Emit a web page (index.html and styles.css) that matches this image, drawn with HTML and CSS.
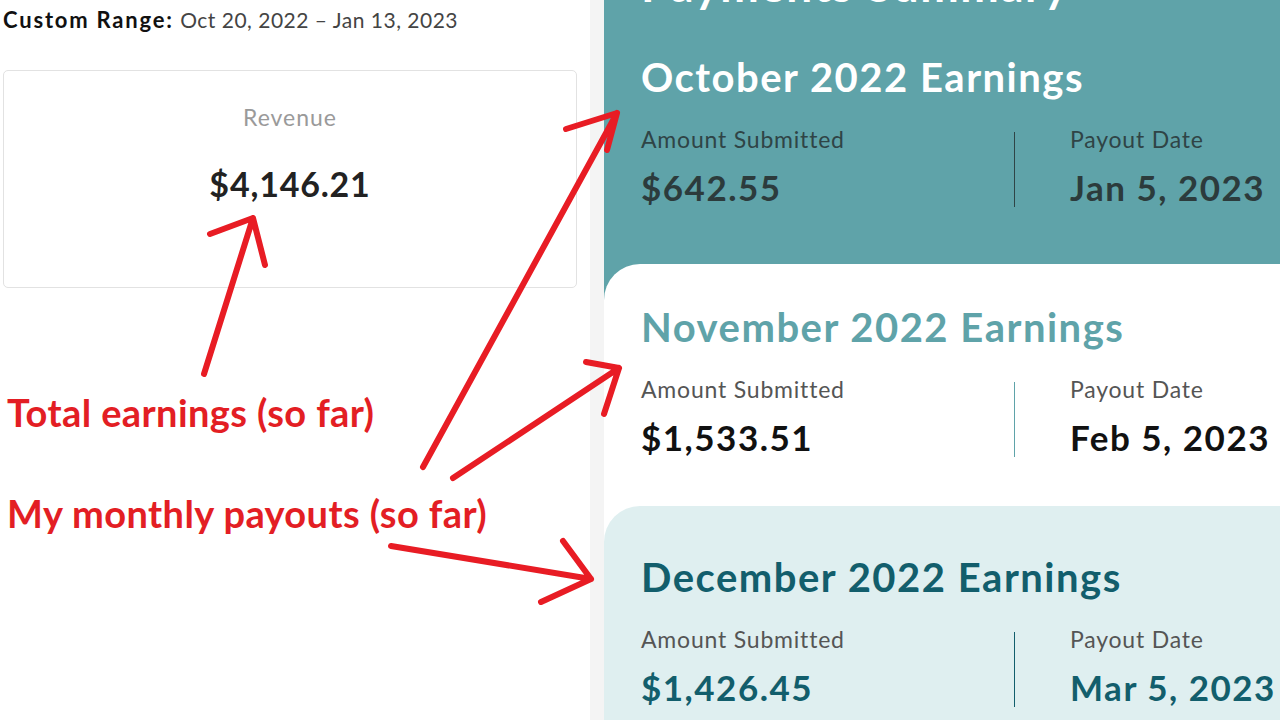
FILE: index.html
```html
<!DOCTYPE html>
<html lang="en">
<head>
<meta charset="utf-8">
<title>Payments Summary</title>
<link rel="stylesheet" href="styles.css">
</head>
<body>
<div class="page">
  <section class="left">
    <p class="range"><b>Custom Range:</b> <span>Oct 20, 2022 – Jan 13, 2023</span></p>
    <div class="revenue">
      <div class="rev-label">Revenue</div>
      <div class="rev-value">$4,146.21</div>
    </div>
    <div class="notes">
      <p class="note note-total">Total earnings (so far)</p>
      <p class="note note-monthly">My monthly payouts (so far)</p>
    </div>
  </section>
  <div class="gutter"></div>
  <section class="right">
    <h1 class="summary-title">Payments Summary</h1>
    <article class="earn earn-oct">
      <h2 class="earn-title">October 2022 Earnings</h2>
      <div class="earn-row">
        <div class="earn-col">
          <div class="earn-label">Amount Submitted</div>
          <div class="earn-value">$642.55</div>
        </div>
        <div class="earn-divider"></div>
        <div class="earn-col earn-col-date">
          <div class="earn-label">Payout Date</div>
          <div class="earn-value">Jan 5, 2023</div>
        </div>
      </div>
    </article>
    <div class="stack stack-teal">
      <article class="earn earn-nov">
        <h2 class="earn-title">November 2022 Earnings</h2>
        <div class="earn-row">
          <div class="earn-col">
            <div class="earn-label">Amount Submitted</div>
            <div class="earn-value">$1,533.51</div>
          </div>
          <div class="earn-divider"></div>
          <div class="earn-col earn-col-date">
            <div class="earn-label">Payout Date</div>
            <div class="earn-value">Feb 5, 2023</div>
          </div>
        </div>
      </article>
    </div>
    <div class="stack stack-white">
      <article class="earn earn-dec">
        <h2 class="earn-title">December 2022 Earnings</h2>
        <div class="earn-row">
          <div class="earn-col">
            <div class="earn-label">Amount Submitted</div>
            <div class="earn-value">$1,426.45</div>
          </div>
          <div class="earn-divider"></div>
          <div class="earn-col earn-col-date">
            <div class="earn-label">Payout Date</div>
            <div class="earn-value">Mar 5, 2023</div>
          </div>
        </div>
      </article>
    </div>
  </section>
  <svg class="arrows" width="1280" height="720" viewBox="0 0 1280 720" aria-hidden="true">
    <g fill="none" stroke="#e81c24" stroke-width="6" stroke-linecap="round" stroke-linejoin="round">
      <path d="M204 374 L253 218 M210 234 L253 218 L265 265"/>
      <path d="M423 467 L617 113 M566 129 L617 113 L607 150"/>
      <path d="M453 478 L619 368 M586 362 L619 368 L604 414"/>
      <path d="M391 546 L591 579 M563 541 L591 579 L541 602"/>
    </g>
  </svg>
</div>
</body>
</html>
```

FILE: styles.css
```css
* { box-sizing: border-box; }

html, body {
  margin: 0;
  padding: 0;
  background: #ffffff;
}

body {
  font-family: "Lato", "Liberation Sans", sans-serif;
  color: #222;
}

.page {
  position: relative;
  width: 1280px;
  height: 720px;
  overflow: hidden;
  display: flex;
}

/* ---------- left column ---------- */
.left {
  width: 590px;
  flex: none;
  padding-left: 3px;
  padding-right: 13px;
  background: #ffffff;
}

.range {
  margin: 0;
  padding-top: 8px;
  font-size: 21px;
  line-height: 24px;
  color: #444;
  white-space: nowrap;
}

.range b {
  color: #111;
  font-size: 22px;
  font-weight: 700;
  letter-spacing: 1.8px;
  margin-right: 1px;
}

.range span {
  letter-spacing: 0.5px;
}

.revenue {
  margin-top: 38px;
  height: 218px;
  border: 1px solid #e2e2e2;
  border-radius: 5px;
  display: flex;
  flex-direction: column;
  align-items: center;
  padding-top: 32px;
}

.rev-label {
  font-size: 23px;
  line-height: 28px;
  letter-spacing: 1px;
  color: #9a9a9a;
}

.rev-value {
  margin-top: 33px;
  font-size: 34px;
  line-height: 40px;
  letter-spacing: 0.8px;
  font-weight: 700;
  color: #222;
}

.notes {
  padding-left: 4px;
}

.note {
  margin: 0;
  font-size: 38px;
  font-weight: 700;
  line-height: 40px;
  letter-spacing: 0.4px;
  color: #e31e24;
  white-space: nowrap;
}

.note-total {
  margin-top: 104px;
}

.note-monthly {
  margin-top: 61px;
}

/* ---------- gutter ---------- */
.gutter {
  width: 14px;
  flex: none;
  background: #f4f4f4;
}

/* ---------- right column ---------- */
.right {
  flex: 1;
  background: #5fa3a9;
  min-width: 0;
}

.summary-title {
  margin: -38px 0 0;
  padding-left: 37px;
  font-size: 46px;
  line-height: 46px;
  letter-spacing: 1.5px;
  font-weight: 700;
  color: #ffffff;
  white-space: nowrap;
}

.earn {
  padding-left: 37px;
}

.earn-oct {
  padding-top: 46px;
  padding-bottom: 57px;
}

.earn-title {
  margin: 0;
  font-size: 40px;
  line-height: 46px;
  letter-spacing: 1.5px;
  font-weight: 700;
  white-space: nowrap;
}

.earn-row {
  margin-top: 25px;
  display: grid;
  grid-template-columns: 373px 1px 1fr;
}

.earn-col-date {
  padding-left: 55px;
}

.earn-label {
  font-size: 23px;
  line-height: 28px;
  letter-spacing: 0.8px;
  font-weight: 400;
  white-space: nowrap;
}

.earn-value {
  margin-top: 14px;
  font-size: 35px;
  line-height: 40px;
  letter-spacing: 1.5px;
  font-weight: 700;
  white-space: nowrap;
}

.earn-divider {
  margin-top: 7px;
  width: 1px;
}

/* October (teal) */
.earn-oct .earn-title { color: #ffffff; }
.earn-oct .earn-label { color: #2f4446; }
.earn-oct .earn-value { color: #2c3b3c; }
.earn-oct .earn-divider { background: #2f4446; }

/* stacked cards: wrapper shows previous card's colour behind the rounded corner */
.stack-teal { background: #5fa3a9; }
.stack-white { background: #ffffff; }

.earn-nov,
.earn-dec {
  border-top-left-radius: 36px;
}

/* November (white) */
.earn-nov {
  background: #ffffff;
  padding-top: 40px;
  padding-bottom: 49px;
}
.earn-nov .earn-title { color: #5fa3a9; }
.earn-nov .earn-label { color: #555; }
.earn-nov .earn-value { color: #111; }
.earn-nov .earn-divider { background: #5fa3a9; }

/* December (light teal) */
.earn-dec {
  background: #dfeff0;
  padding-top: 48px;
  padding-bottom: 40px;
}
.earn-dec .earn-title { color: #125e6c; }
.earn-dec .earn-label { color: #555; }
.earn-dec .earn-value { color: #125e6c; }
.earn-dec .earn-divider { background: #125e6c; }

/* ---------- annotation overlay ---------- */
.arrows {
  position: absolute;
  left: 0;
  top: 0;
  pointer-events: none;
}
```
